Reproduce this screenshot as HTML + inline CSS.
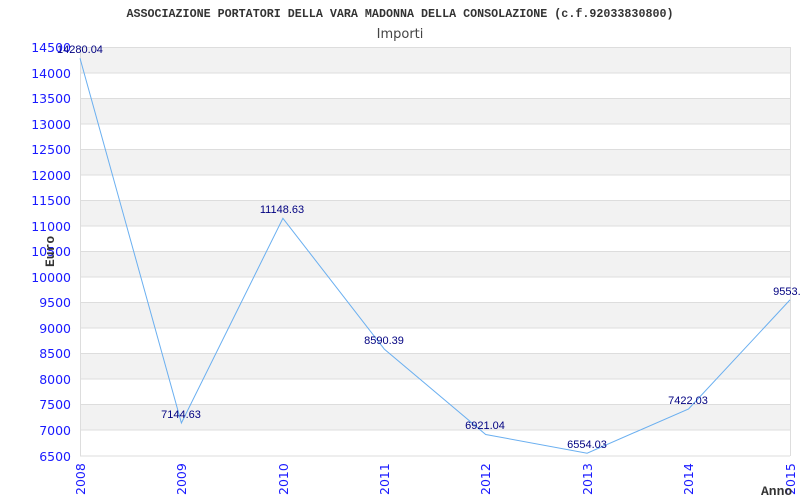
<!DOCTYPE html>
<html><head><style>body{margin:0;background:#fff}svg{display:block}</style></head><body>
<svg width="800" height="500" xmlns="http://www.w3.org/2000/svg">
<rect width="800" height="500" fill="#fff"/>
<text x="400" y="17" text-anchor="middle" font-family="Liberation Mono, monospace" font-weight="bold" font-size="11.7" fill="#333">ASSOCIAZIONE PORTATORI DELLA VARA MADONNA DELLA CONSOLAZIONE (c.f.92033830800)</text>
<text x="400" y="38" text-anchor="middle" font-family="DejaVu Sans, sans-serif" font-size="13" fill="#444">Importi</text>
<g fill="#f2f2f2">
<rect x="80" y="47" width="710" height="25.56"/>
<rect x="80" y="98.1" width="710" height="25.56"/>
<rect x="80" y="149.3" width="710" height="25.56"/>
<rect x="80" y="200.4" width="710" height="25.56"/>
<rect x="80" y="251.5" width="710" height="25.56"/>
<rect x="80" y="302.6" width="710" height="25.56"/>
<rect x="80" y="353.8" width="710" height="25.56"/>
<rect x="80" y="404.9" width="710" height="25.56"/>
</g>
<g stroke="#ddd" stroke-width="1">
<line x1="80" x2="790" y1="47.5" y2="47.5"/><line x1="80" x2="790" y1="73" y2="73"/><line x1="80" x2="790" y1="98.5" y2="98.5"/><line x1="80" x2="790" y1="124" y2="124"/><line x1="80" x2="790" y1="149.5" y2="149.5"/><line x1="80" x2="790" y1="175" y2="175"/><line x1="80" x2="790" y1="200.5" y2="200.5"/><line x1="80" x2="790" y1="226" y2="226"/><line x1="80" x2="790" y1="251.5" y2="251.5"/><line x1="80" x2="790" y1="277" y2="277"/><line x1="80" x2="790" y1="302.5" y2="302.5"/><line x1="80" x2="790" y1="328" y2="328"/><line x1="80" x2="790" y1="353.5" y2="353.5"/><line x1="80" x2="790" y1="379" y2="379"/><line x1="80" x2="790" y1="404.5" y2="404.5"/><line x1="80" x2="790" y1="430" y2="430"/><line x1="80" x2="790" y1="456" y2="456"/>
<line x1="80.5" x2="80.5" y1="47" y2="456"/><line x1="790.5" x2="790.5" y1="47" y2="456"/>
</g>
<g font-family="DejaVu Sans, sans-serif" font-size="12.5" fill="#1a1aff" text-anchor="end">
<text x="71" y="52">14500</text><text x="71" y="78">14000</text><text x="71" y="103">13500</text><text x="71" y="129">13000</text><text x="71" y="154">12500</text><text x="71" y="180">12000</text><text x="71" y="205">11500</text><text x="71" y="231">11000</text><text x="71" y="256">10500</text><text x="71" y="282">10000</text><text x="71" y="307">9500</text><text x="71" y="333">9000</text><text x="71" y="358">8500</text><text x="71" y="384">8000</text><text x="71" y="409">7500</text><text x="71" y="435">7000</text><text x="71" y="461">6500</text>
</g>
<g font-family="DejaVu Sans, sans-serif" font-size="12.5" fill="#1a1aff">
<text transform="translate(85,495) rotate(-90)">2008</text>
<text transform="translate(186,495) rotate(-90)">2009</text>
<text transform="translate(288,495) rotate(-90)">2010</text>
<text transform="translate(389,495) rotate(-90)">2011</text>
<text transform="translate(490,495) rotate(-90)">2012</text>
<text transform="translate(592,495) rotate(-90)">2013</text>
<text transform="translate(693,495) rotate(-90)">2014</text>
<text transform="translate(795,495) rotate(-90)">2015</text>
</g>
<text transform="translate(54,267) rotate(-90)" font-family="Liberation Mono, monospace" font-weight="bold" font-size="13" fill="#333">Euro</text>
<text x="761" y="495" font-family="Liberation Mono, monospace" font-weight="bold" font-size="13" fill="#333">Anno</text>
<polyline fill="none" stroke="#6aaff0" stroke-width="1" points="80,58.3 181.4,423 282.9,218.3 384.3,349.1 485.7,434.5 587.1,453.2 688.6,408.9 790,299.9"/>
<g font-family="Liberation Sans, sans-serif" font-size="11" fill="#000080" text-anchor="middle">
<text x="80" y="53">14280.04</text>
<text x="181" y="418">7144.63</text>
<text x="282" y="213">11148.63</text>
<text x="384" y="344">8590.39</text>
<text x="485" y="429">6921.04</text>
<text x="587" y="448">6554.03</text>
<text x="688" y="404">7422.03</text>
<text x="790" y="295">9553.9</text>
</g>
</svg>
</body></html>
